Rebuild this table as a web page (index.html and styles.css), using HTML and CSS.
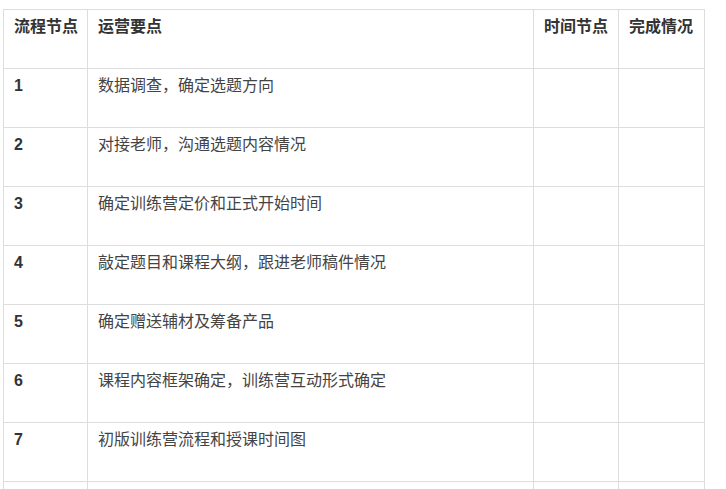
FILE: index.html
```html
<!DOCTYPE html>
<html lang="zh">
<head>
<meta charset="utf-8">
<link rel="stylesheet" href="styles.css">
</head>
<body>
<table class="plan">
  <colgroup>
    <col class="c-step">
    <col class="c-point">
    <col class="c-time">
    <col class="c-done">
  </colgroup>
  <thead>
    <tr><th>流程节点</th><th>运营要点</th><th>时间节点</th><th>完成情况</th></tr>
  </thead>
  <tbody>
    <tr><td class="num">1</td><td>数据调查，确定选题方向</td><td></td><td></td></tr>
    <tr><td class="num">2</td><td>对接老师，沟通选题内容情况</td><td></td><td></td></tr>
    <tr><td class="num">3</td><td>确定训练营定价和正式开始时间</td><td></td><td></td></tr>
    <tr><td class="num">4</td><td>敲定题目和课程大纲，跟进老师稿件情况</td><td></td><td></td></tr>
    <tr><td class="num">5</td><td>确定赠送辅材及筹备产品</td><td></td><td></td></tr>
    <tr><td class="num">6</td><td>课程内容框架确定，训练营互动形式确定</td><td></td><td></td></tr>
    <tr><td class="num">7</td><td>初版训练营流程和授课时间图</td><td></td><td></td></tr>
    <tr><td class="num"></td><td></td><td></td><td></td></tr>
  </tbody>
</table>
</body>
</html>
```
FILE: styles.css
```css
html, body {
  margin: 0;
  padding: 0;
  background: #ffffff;
  overflow: hidden;
}
body {
  padding: 9px 0 0 3px;
  font-family: "Liberation Sans", "Noto Sans CJK SC", sans-serif;
  font-size: 16px;
  color: #333333;
}
.plan {
  border-collapse: collapse;
  table-layout: fixed;
  width: 701px;
}
.c-step { width: 84px; }
.c-point { width: 446px; }
.c-time { width: 85px; }
.c-done { width: 86px; }
.plan th,
.plan td {
  border: 1px solid #dddddd;
  box-sizing: border-box;
  height: 59px;
  padding: 5px 10px 0 10px;
  vertical-align: top;
  text-align: left;
  line-height: 24px;
  white-space: nowrap;
}
.plan th {
  font-weight: bold;
  color: #333333;
}
.plan td {
  color: #444444;
}
.plan td.num {
  font-weight: bold;
  color: #333333;
}
```
